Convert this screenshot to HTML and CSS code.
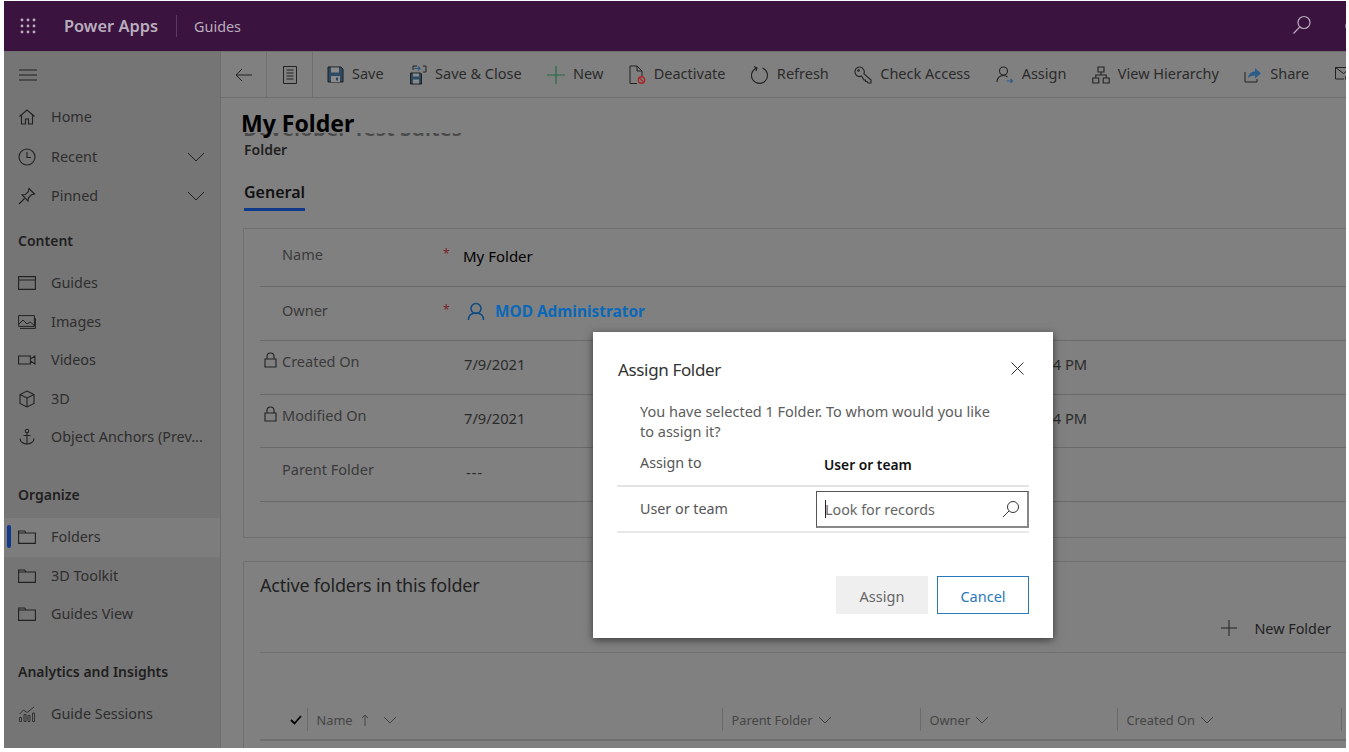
FILE: index.html
```html
<!DOCTYPE html>
<html>
<head>
    <title>My Folder - Power Apps</title>
    <link rel="stylesheet" href="styles.css">
</head>
<body>
<div class="screen">
    <header class="topbar">
        <svg class="waffle" width="18" height="18" viewBox="0 0 18 18" fill="#b9adbd">
            <circle cx="3" cy="3" r="1.4"/><circle cx="9" cy="3" r="1.4"/><circle cx="15" cy="3" r="1.4"/>
            <circle cx="3" cy="9" r="1.4"/><circle cx="9" cy="9" r="1.4"/><circle cx="15" cy="9" r="1.4"/>
            <circle cx="3" cy="15" r="1.4"/><circle cx="9" cy="15" r="1.4"/><circle cx="15" cy="15" r="1.4"/>
        </svg>
        <span class="brand">Power Apps</span>
        <span class="app-name">Guides</span>
        <svg class="top-search" width="20" height="20" viewBox="0 0 20 20" fill="none" stroke="#b9adbd" stroke-width="1.2">
            <circle cx="12" cy="7.5" r="6"/><path d="M7.8 11.8 1.5 18.5"/>
        </svg>
        <svg class="top-help" width="16" height="16" viewBox="0 0 16 16" fill="none" stroke="#b9adbd" stroke-width="1.2"><circle cx="8" cy="8" r="7"/></svg>
    </header>

    <div class="body-row">
        <nav class="sidebar">
            <div class="nav-toggle">
                <svg width="18" height="12" viewBox="0 0 18 12" stroke="#222" stroke-width="1.2"><path d="M0 1h18M0 6h18M0 11h18"/></svg>
            </div>
            <a class="nav-row">
                <svg class="nav-icon" width="18" height="18" viewBox="0 0 18 18" fill="none" stroke="#222" stroke-width="1.1"><path d="M1.5 8.5 9 2l7.5 6.5M3.5 7v9h4v-5h3v5h4V7"/></svg>
                <span>Home</span>
            </a>
            <a class="nav-row spaced">
                <svg class="nav-icon" width="18" height="18" viewBox="0 0 18 18" fill="none" stroke="#222" stroke-width="1.1"><circle cx="9" cy="9" r="8"/><path d="M9 4v5.5h4"/></svg>
                <span>Recent</span>
                <svg class="nav-chevron" width="18" height="10" viewBox="0 0 18 10" fill="none" stroke="#222" stroke-width="1"><path d="M1 1l8 8 8-8"/></svg>
            </a>
            <a class="nav-row spaced">
                <svg class="nav-icon" width="18" height="18" viewBox="0 0 18 18" fill="none" stroke="#222" stroke-width="1.1"><path d="M11 1.5l5.5 5.5-3 .8-3 3-.4 3.2-6-6 3.2-.4 3-3zM6.5 11.5 1 17"/></svg>
                <span>Pinned</span>
                <svg class="nav-chevron" width="18" height="10" viewBox="0 0 18 10" fill="none" stroke="#222" stroke-width="1"><path d="M1 1l8 8 8-8"/></svg>
            </a>

            <div class="nav-head first">Content</div>
            <a class="nav-row">
                <svg class="nav-icon" width="18" height="14" viewBox="0 0 18 14" fill="none" stroke="#222" stroke-width="1.1"><path d="M.6.6h16.800v12.800H.6zM.6 4h16.800"/></svg>
                <span>Guides</span>
            </a>
            <a class="nav-row">
                <svg class="nav-icon" width="18" height="14" viewBox="0 0 18 14" fill="none" stroke="#222" stroke-width="1"><path d="M.6.6h15.800v10.800H.6zM2 13.400h15.400V3"/><path d="M1 9l4-4 4 4 3-2 4 3"/></svg>
                <span>Images</span>
            </a>
            <a class="nav-row">
                <svg class="nav-icon" width="18" height="10" viewBox="0 0 18 10" fill="none" stroke="#222" stroke-width="1.1"><path d="M.6 1h11.800v8H.6zM12.400 4l4.500-3v8l-4.500-3"/></svg>
                <span>Videos</span>
            </a>
            <a class="nav-row">
                <svg class="nav-icon" width="18" height="18" viewBox="0 0 18 18" fill="none" stroke="#222" stroke-width="1.1"><path d="M9 1l7 3.500v9L9 17l-7-3.500v-9zM2 4.500 9 8l7-3.500M9 8v9"/></svg>
                <span>3D</span>
            </a>
            <a class="nav-row">
                <svg class="nav-icon" width="18" height="18" viewBox="0 0 18 18" fill="none" stroke="#222" stroke-width="1.1"><circle cx="9" cy="3" r="1.700"/><path d="M9 4.700V16M5.500 7.500h7M2 10.500c0 3.500 3.500 5.500 7 5.500s7-2 7-5.500"/></svg>
                <span>Object Anchors (Prev...</span>
            </a>

            <div class="nav-head">Organize</div>
            <a class="nav-row selected">
                <svg class="nav-icon" width="18" height="14" viewBox="0 0 18 14" fill="none" stroke="#222" stroke-width="1.1"><path d="M.6 13.400V1h6l1.500 2h9.300v10.400zM.6 3h7.500"/></svg>
                <span>Folders</span>
            </a>
            <a class="nav-row">
                <svg class="nav-icon" width="18" height="14" viewBox="0 0 18 14" fill="none" stroke="#222" stroke-width="1.1"><path d="M.6 13.400V1h6l1.500 2h9.300v10.400zM.6 3h7.500"/></svg>
                <span>3D Toolkit</span>
            </a>
            <a class="nav-row">
                <svg class="nav-icon" width="18" height="14" viewBox="0 0 18 14" fill="none" stroke="#222" stroke-width="1.1"><path d="M.6 13.400V1h6l1.500 2h9.300v10.400zM.6 3h7.500"/></svg>
                <span>Guides View</span>
            </a>

            <div class="nav-head">Analytics and Insights</div>
            <a class="nav-row">
                <svg class="nav-icon" width="18" height="18" viewBox="0 0 18 18" fill="none" stroke="#333" stroke-width="1"><path d="M1.500 12.500h2v4h-2zM6 9.500h2v7H6zM10 10.500h2v6h-2zM14.500 8h2v8.500h-2zM1.500 9l4-4 3.500 2.500L16 2"/></svg>
                <span>Guide Sessions</span>
            </a>
        </nav>

        <main class="main">
            <div class="commandbar">
                <button class="cmd-square">
                    <svg width="18" height="14" viewBox="0 0 18 14" fill="none" stroke="#222" stroke-width="1"><path d="M17 7H1M7 1 1 7l6 6"/></svg>
                </button>
                <button class="cmd-square">
                    <svg width="14" height="18" viewBox="0 0 14 18" fill="none" stroke="#222" stroke-width="1"><path d="M.5.500h13v17H.500zM3.500 4h7M3.500 7h7M3.500 10h7M3.500 13h7"/></svg>
                </button>
                <div class="cmd-items">
                    <span class="cmd">
                        <svg width="17" height="17" viewBox="0 0 17 17"><path d="M1 1h13l2 2v13H1z" fill="#2c4a63" stroke="#1d1d1d"/><path d="M4 1.500h8v5H4z" fill="#8a8a8a"/><path d="M4 10h9v6H4z" fill="#8a8a8a"/><path d="M9 11.500h2v3H9z" fill="#2c4a63"/></svg>
                        <span>Save</span>
                    </span>
                    <span class="cmd">
                        <svg width="18" height="20" viewBox="0 0 18 20"><path d="M1.500 8h10l1 1v10h-11z" fill="#2c4a63" stroke="#1d1d1d"/><path d="M4 14.500h6v4H4zM4 8.500h6v3H4z" fill="#8a8a8a"/><path d="M4 5V1h4M14 1h3v6h-3" fill="none" stroke="#222"/><path d="M5 3.500h6M9 1.500l2 2-2 2" fill="none" stroke="#2c5c88" stroke-width="1.200"/></svg>
                        <span>Save &amp; Close</span>
                    </span>
                    <span class="cmd">
                        <svg width="18" height="18" viewBox="0 0 18 18" stroke="#246b46" stroke-width="1.200"><path d="M9 0v18M0 9h18"/></svg>
                        <span>New</span>
                    </span>
                    <span class="cmd">
                        <svg width="17" height="20" viewBox="0 0 17 20" fill="none"><path d="M8 18.500H1V1h7l5 5v5M8 1v5h5" stroke="#222"/><circle cx="12.500" cy="15" r="3.200" stroke="#a8282c" stroke-width="1.400"/><path d="M10.200 12.800l4.600 4.400" stroke="#a8282c" stroke-width="1.400"/></svg>
                        <span>Deactivate</span>
                    </span>
                    <span class="cmd">
                        <svg width="18" height="19" viewBox="0 0 18 19" fill="none" stroke="#222" stroke-width="1.100"><path d="M11.500 3A8 8 0 1 1 5.500 3M3 1.500l3 1.500-1 3"/></svg>
                        <span>Refresh</span>
                    </span>
                    <span class="cmd">
                        <svg width="18" height="18" viewBox="0 0 18 18" fill="none" stroke="#222" stroke-width="1.100"><path d="M1 5.500a4.500 4.500 0 0 1 8.500-2c1 1.500 1 3 .3 4.200L17 14v3h-3l-1-1.500h-1.500V14H10l-2.500-4A4.500 4.500 0 0 1 1 5.500z"/><circle cx="4.500" cy="4.500" r=".8"/></svg>
                        <span>Check Access</span>
                    </span>
                    <span class="cmd">
                        <svg width="18" height="18" viewBox="0 0 18 18" fill="none" stroke-width="1.100"><circle cx="7.500" cy="5" r="4" stroke="#222"/><path d="M.8 16c.5-4 3-6.500 6.700-6.500 1.700 0 3 .5 4 1.500" stroke="#222"/><path d="M10.500 15h6M14.500 13l2 2-2 2" stroke="#2c5c88"/></svg>
                        <span>Assign</span>
                    </span>
                    <span class="cmd">
                        <svg width="18" height="18" viewBox="0 0 18 18" fill="none" stroke="#222" stroke-width="1.100"><path d="M6 1h6v5H6zM.8 12h6v5h-6zM11.200 12h6v5h-6zM9 6v3M3.800 12V9h10.400v3"/></svg>
                        <span>View Hierarchy</span>
                    </span>
                    <span class="cmd">
                        <svg width="18" height="16" viewBox="0 0 18 16" fill="none"><path d="M1 5v10h12v-3" stroke="#222"/><path d="M4 11c.5-4 3.500-6.500 7-6.500V1l6 5.500-6 5V8.500c-3 0-5.500 1-7 2.500z" fill="#2c5c88"/></svg>
                        <span>Share</span>
                    </span>
                    <span class="cmd">
                        <svg width="18" height="15" viewBox="0 0 18 15" fill="none" stroke="#222"><path d="M9 12H.5V.5h16V7M.5.500l8 6 8-6"/><circle cx="13.500" cy="11" r="3"/></svg>
                    </span>
                </div>
            </div>

            <div class="content">
                <div class="title-block">
                    <div class="ghost"><span>Developer Test Suites</span></div>
                    <h1>My Folder</h1>
                    <div class="entity">Folder</div>
                </div>
                <div class="tab">General</div>

                <section class="card form-card">
                    <div class="form-row row-name">
                        <span></span>
                        <span class="label">Name</span>
                        <span class="star">*</span>
                        <span class="value dark">My Folder</span>
                    </div>
                    <div class="form-row row-owner">
                        <span></span>
                        <span class="label">Owner</span>
                        <span class="star">*</span>
                        <span class="value owner">
                            <svg width="18" height="19" viewBox="0 0 18 19" fill="none" stroke="#0f4a80" stroke-width="1.500"><circle cx="9" cy="6.500" r="5"/><path d="M1.500 18c0-4.500 3-7 7.500-7s7.500 2.500 7.500 7"/></svg>
                            <b>MOD Administrator</b>
                        </span>
                    </div>
                    <div class="form-row row-date">
                        <svg class="lock" width="13" height="16" viewBox="0 0 13 16" fill="none" stroke="#222" stroke-width="1.100"><path d="M1 7h11v8H1zM3 7V4.500a3.500 3.500 0 0 1 7 0V7"/></svg>
                        <span class="label">Created On</span>
                        <span></span>
                        <span class="value date">7/9/2021</span>
                        <span class="value date time">3:34 PM</span>
                    </div>
                    <div class="form-row row-date">
                        <svg class="lock" width="13" height="16" viewBox="0 0 13 16" fill="none" stroke="#222" stroke-width="1.100"><path d="M1 7h11v8H1zM3 7V4.500a3.500 3.500 0 0 1 7 0V7"/></svg>
                        <span class="label">Modified On</span>
                        <span></span>
                        <span class="value date">7/9/2021</span>
                        <span class="value date time">3:34 PM</span>
                    </div>
                    <div class="form-row row-parent">
                        <span></span>
                        <span class="label">Parent Folder</span>
                        <span></span>
                        <span class="value date">---</span>
                    </div>
                </section>

                <section class="card list-card">
                    <h2>Active folders in this folder</h2>
                    <div class="list-actions">
                        <svg width="16" height="16" viewBox="0 0 16 16" stroke="#222" stroke-width="1"><path d="M8 0v16M0 8h16"/></svg>
                        <span>New Folder</span>
                    </div>
                    <div class="list-head">
                        <div class="col col-check">
                            <svg width="12" height="10" viewBox="0 0 12 10" fill="none" stroke="#000" stroke-width="1.800"><path d="M1 5l3.500 3.500L11 1"/></svg>
                        </div>
                        <div class="col">Name
                            <svg class="sort-arrow" width="8" height="12" viewBox="0 0 8 12" fill="none" stroke="#444"><path d="M4 12V1M1 4l3-3 3 3"/></svg>
                            <svg class="chev-name" width="14" height="8" viewBox="0 0 14 8" fill="none" stroke="#444"><path d="M1 1l6 6 6-6"/></svg>
                        </div>
                        <div class="col">Parent Folder
                            <svg width="14" height="8" viewBox="0 0 14 8" fill="none" stroke="#444"><path d="M1 1l6 6 6-6"/></svg>
                        </div>
                        <div class="col">Owner
                            <svg width="14" height="8" viewBox="0 0 14 8" fill="none" stroke="#444"><path d="M1 1l6 6 6-6"/></svg>
                        </div>
                        <div class="col">Created On
                            <svg width="14" height="8" viewBox="0 0 14 8" fill="none" stroke="#444"><path d="M1 1l6 6 6-6"/></svg>
                        </div>
                    </div>
                </section>
            </div>
        </main>
    </div>

    <div class="dialog">
        <div class="dialog-head">
            <h3>Assign Folder</h3>
            <svg width="13" height="13" viewBox="0 0 13 13" stroke="#333" stroke-width="1"><path d="M.5.500l12 12M12.500.500l-12 12"/></svg>
        </div>
        <p class="dialog-text">You have selected 1 Folder. To whom would you like to assign it?</p>
        <div class="assign-row">
            <span class="dialog-label">Assign to</span>
            <span class="assign-value">User or team</span>
        </div>
        <div class="lookup-row">
            <span class="dialog-label">User or team</span>
            <div class="lookup">
                <span class="caret"></span>
                <span class="placeholder">Look for records</span>
                <svg width="18" height="18" viewBox="0 0 18 18" fill="none" stroke="#333" stroke-width="1"><circle cx="11" cy="7" r="5.500"/><path d="M7 11 1 17"/></svg>
            </div>
        </div>
        <div class="dialog-buttons">
            <button class="btn btn-off">Assign</button>
            <button class="btn btn-cancel">Cancel</button>
        </div>
    </div>
</div>
</body>
</html>
```

FILE: styles.css
```css
* {
    box-sizing: border-box;
}

html, body {
    margin: 0;
    height: 100%;
    background: #fff;
    overflow: hidden;
}

body {
    font-family: "Noto Sans", "Open Sans", sans-serif;
    font-size: 14px;
    color: #2b2b2b;
}

.screen {
    position: relative;
    width: 1342px;
    height: 747px;
    margin: 1px 0 0 4px;
    background: #808080;
    overflow: hidden;
}

/* top bar */
.topbar {
    display: flex;
    align-items: center;
    height: 50px;
    padding-left: 15px;
    background: #3a133f;
    color: #b9adbd;
}

.brand {
    margin-left: 27px;
    padding-right: 18px;
    border-right: 1px solid #5a3a5f;
    font-size: 16.4px;
    font-weight: 600;
    line-height: 22px;
}

.app-name {
    margin-left: 17px;
    font-size: 14.4px;
}

.top-search {
    flex: none;
    margin: -3px 33px 0 auto;
}

.top-help {
    flex: none;
    margin-right: -15px;
}

.body-row {
    display: flex;
    height: 697px;
    border-top: 1px solid #6f6f6f;
}

/* left nav */
.sidebar {
    flex: 0 0 217px;
    background: #757575;
    border-right: 1px solid #6c6c6c;
}

.nav-toggle {
    display: flex;
    align-items: center;
    height: 46px;
    padding-left: 15px;
}

.nav-row {
    display: flex;
    align-items: center;
    position: relative;
    height: 38.4px;
    color: #2e2e2e;
}

.nav-row.spaced {
    margin-top: 1px;
}

.nav-icon {
    position: absolute;
    left: 14px;
    top: 50%;
    transform: translateY(-50%);
}

.nav-row > span {
    margin: 0 0 1px 47px;
    font-size: 14.4px;
    white-space: nowrap;
}

.nav-chevron {
    margin-left: auto;
    margin-right: 15px;
}

.nav-row.selected {
    background: #7d7d7d;
}

.nav-row.selected::before {
    content: "";
    position: absolute;
    left: 3px;
    top: 7px;
    width: 4px;
    height: 23px;
    border-radius: 2px;
    background: #0f3a8c;
}

.nav-head {
    display: flex;
    align-items: center;
    height: 62px;
    padding: 14px 0 0 14px;
    font-weight: 600;
    color: #1f1f1f;
}

.nav-head.first {
    height: 49px;
    padding-top: 1px;
}

/* command bar */
.main {
    flex: 1;
    min-width: 0;
}

.commandbar {
    display: flex;
    height: 46px;
    border-bottom: 1px solid #6f6f6f;
    white-space: nowrap;
}

.cmd-square {
    flex: 0 0 46px;
    display: flex;
    align-items: center;
    justify-content: center;
    padding: 0;
    background: none;
    border: 0;
    border-right: 1px solid #6f6f6f;
}

.cmd-items {
    display: flex;
    align-items: center;
    gap: 25.4px;
    margin-left: 14px;
}

.cmd {
    display: flex;
    align-items: center;
    gap: 8px;
    font-size: 14.5px;
    color: #2b2b2b;
}

.cmd span {
    margin-bottom: 4px;
}

/* record body */
.content {
    padding-left: 22px;
}

.title-block {
    position: relative;
    padding-top: 10px;
}

h1 {
    position: relative;
    margin: 0 0 0 -2px;
    font-size: 23px;
    font-weight: 700;
    line-height: 30px;
    color: #000;
}

.ghost {
    position: absolute;
    left: 0;
    top: 35px;
    height: 3px;
    overflow: hidden;
    font-size: 21px;
    font-weight: 600;
    line-height: 30px;
    color: #4a4a4a;
    white-space: nowrap;
}

.ghost span {
    display: block;
    margin-top: -20px;
}

.entity {
    margin: 2px 0 0 1px;
    font-weight: 600;
    line-height: 20px;
    color: #1f1f1f;
}

.tab {
    display: inline-block;
    margin: 21px 0 0 1px;
    padding-bottom: 5px;
    border-bottom: 3px solid #0f3a8c;
    font-size: 16px;
    font-weight: 600;
    line-height: 22px;
    color: #111;
}

.card {
    margin-right: -12px;
    border: 1px solid #6f6f6f;
}

.form-card {
    height: 310px;
    margin-top: 17px;
}

.form-row {
    display: grid;
    grid-template-columns: 18px 161px 20px 565px auto;
    align-items: center;
    margin-left: 16px;
    padding-left: 4px;
    border-bottom: 1px solid #6a6a6a;
}

.row-name {
    height: 58px;
}

.row-owner {
    height: 54px;
}

.row-date {
    height: 53.5px;
}

.row-parent {
    height: 54px;
}

.lock {
    margin-top: -14px;
}

.label {
    font-size: 14.5px;
    color: #3a3a3a;
    margin-top: -8px;
}

.row-date .label {
    margin-top: -12px;
}

.row-parent .label {
    margin-top: -11px;
}

.star {
    margin-top: -8px;
    font-size: 12px;
    color: #7a1f1f;
}

.value {
    color: #2b2b2b;
}

.value.dark {
    font-size: 15px;
    color: #000;
    margin-top: -3px;
}

.owner {
    display: flex;
    align-items: center;
    gap: 10px;
    margin: -4px 0 0 4px;
    font-size: 15.4px;
    color: #0a68b8;
}

.date {
    margin: -6px 0 0 1px;
    font-size: 14.7px;
}

.row-parent .date {
    margin-left: 3px;
    letter-spacing: 1px;
}

.date.time {
    margin-left: 4px;
}

/* subgrid card */
.list-card {
    position: relative;
    height: 200px;
    margin-top: 23px;
    padding: 11px 0 0 16px;
}

h2 {
    margin: 0;
    font-size: 18px;
    font-weight: 400;
    line-height: 24px;
    letter-spacing: -0.2px;
    color: #222;
}

.list-actions {
    display: flex;
    align-items: center;
    justify-content: flex-end;
    gap: 17px;
    height: 56px;
    padding: 10px 26px 3px 0;
    border-bottom: 1px solid #6f6f6f;
    font-size: 14.4px;
    color: #222;
}

.list-head {
    display: grid;
    grid-template-columns: 48px 415px 198px 197px 224px 40px;
    height: 33px;
    margin-top: 55px;
    border-bottom: 2px solid #6f6f6f;
    font-size: 12.8px;
    color: #454545;
}

.col {
    display: flex;
    align-items: center;
    gap: 5px;
    height: 23px;
    padding-left: 8.5px;
    border-right: 1px solid #6a6a6a;
}

.col-check {
    justify-content: flex-end;
    padding-right: 5px;
}

.sort-arrow {
    margin-left: 3px;
}

.chev-name {
    margin-left: 9px;
}

/* modal */
.dialog {
    position: absolute;
    left: 589px;
    top: 331px;
    width: 460px;
    height: 306px;
    padding: 0 24px;
    background: #fff;
    box-shadow: 0 2px 8px rgba(0, 0, 0, 0.55);
    color: #555;
}

.dialog-head {
    display: flex;
    align-items: center;
    justify-content: space-between;
    height: 76px;
    padding: 0 5px 0 1px;
}

.dialog-head h3 {
    margin: 0 0 2px;
    font-size: 17px;
    font-weight: 400;
    letter-spacing: -0.35px;
    color: #333;
}

.dialog-head svg {
    margin-top: -3px;
}

.dialog-text {
    width: 365px;
    margin: -7px 0 0 23px;
    font-size: 14.5px;
    line-height: 20px;
    color: #5c5c5c;
}

.assign-row {
    display: flex;
    align-items: center;
    height: 43px;
    margin-top: 3px;
    padding-left: 23px;
    border-bottom: 2px solid #e4e4e4;
}

.dialog-label {
    flex: 0 0 184px;
    font-size: 14.3px;
    color: #555;
}

.assign-row .dialog-label {
    margin-bottom: 5px;
}

.assign-value {
    margin-bottom: 1px;
    font-weight: 600;
    color: #111;
    font-size: 13.8px;
}

.lookup-row {
    display: flex;
    align-items: center;
    height: 46px;
    padding-left: 23px;
    border-bottom: 2px solid #e8e8e8;
}

.lookup-row .dialog-label {
    margin-bottom: 2px;
}

.dialog-label + .lookup {
    margin-left: -8px;
}

.lookup {
    display: flex;
    align-items: center;
    flex: 1;
    height: 37px;
    margin-top: 1px;
    padding: 0 7px 0 8px;
    border: 1px solid #555;
    border-bottom: 2px solid #888;
    border-right: 2px solid #888;
}

.caret {
    width: 1px;
    height: 18px;
    background: #222;
}

.placeholder {
    flex: 1;
    margin-left: -1px;
    font-size: 14.3px;
    color: #666;
}

.dialog-buttons {
    display: flex;
    justify-content: flex-end;
    gap: 9px;
    margin-top: 43px;
}

.btn {
    width: 92px;
    height: 38px;
    padding: 1px 0 0;
    font-family: inherit;
    font-size: 14.5px;
}

.btn-off {
    border: 0;
    background: #efefef;
    color: #666;
}

.btn-cancel {
    border: 1px solid #2b79b9;
    background: #fff;
    color: #2b79b9;
}
```
